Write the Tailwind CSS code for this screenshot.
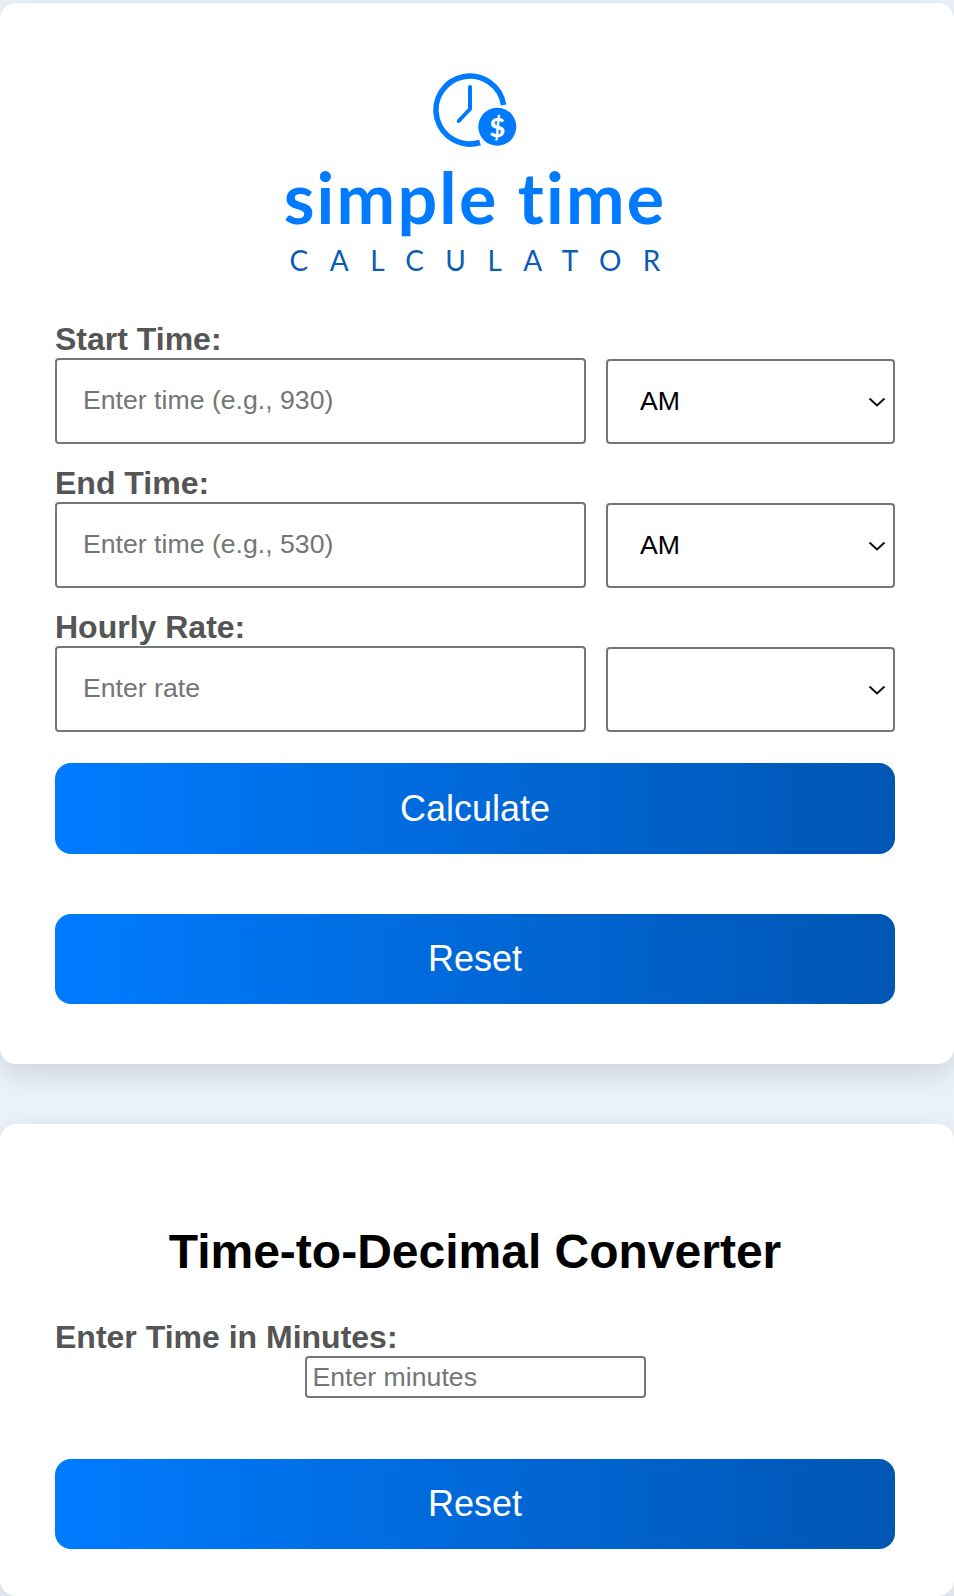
<!DOCTYPE html>
<html lang="en">
<head>
<meta charset="utf-8">
<title>Simple Time Calculator</title>
<script src="https://cdn.jsdelivr.net/npm/@tailwindcss/browser@4"></script>
</head>
<body class="bg-[#ebf2fa] font-['Liberation_Sans',Arial,sans-serif] overflow-hidden h-[1596px]">
<main class="pt-[3px] flex flex-col gap-[60px]">
  <section class="bg-white rounded-[16px] shadow-[0_10px_32px_rgba(0,0,0,0.13)] pl-[55px] pr-[59px] pt-[67px] h-[1061px]">
    <div class="flex flex-col items-center">
      <svg class="block" width="100" height="80" viewBox="425 70 100 80" fill="none">
        <path d="M503.6 105 A34 34 0 1 0 480 142.5" stroke="#007bff" stroke-width="5.5"/>
        <path d="M470 87 V109 L458.7 121" stroke="#007bff" stroke-width="4" stroke-linecap="round" stroke-linejoin="round"/>
        <circle cx="497.3" cy="126.7" r="19" fill="#007bff"/>
        <text x="497.3" y="136.5" text-anchor="middle" fill="#fff" font-size="27" font-weight="900" font-family="Lato, sans-serif">$</text>
      </svg>
      <div class="font-['Lato',sans-serif] font-bold text-[#007bff] text-[70px] leading-[80px] mt-[7px] tracking-[2.2px] whitespace-nowrap">simple time</div>
      <div class="font-['Lato',sans-serif] font-normal text-[#0a5cb4] text-[28px] leading-[30px] mt-[8px] tracking-[21.5px] mr-[-21.5px] whitespace-nowrap">CALCULATOR</div>
    </div>

    <div class="mt-[46px] flex flex-col gap-[21px]">
      <div>
        <label class="block text-[32px] leading-[37px] font-bold text-[#555]">Start Time:</label>
        <div class="flex items-end gap-[20px]">
          <input class="w-[531px] h-[86px] border-2 border-[#767676] rounded-[4px] pl-[26px] pb-[1px] text-[26.67px] placeholder:text-[#757575] bg-white" placeholder="Enter time (e.g., 930)">
          <div class="relative w-[289px] h-[85px]">
            <select class="appearance-none w-full h-full border-2 border-[#767676] rounded-[4px] pl-[32px] pb-[2px] text-[26.67px] text-black bg-white"><option>AM</option><option>PM</option></select>
            <svg class="absolute right-[9px] top-[38px] pointer-events-none" width="18" height="10" viewBox="0 0 18 10" fill="none"><path d="M1.5 1.5 L9 8.5 L16.5 1.5" stroke="#111" stroke-width="2"/></svg>
          </div>
        </div>
      </div>
      <div>
        <label class="block text-[32px] leading-[37px] font-bold text-[#555]">End Time:</label>
        <div class="flex items-end gap-[20px]">
          <input class="w-[531px] h-[86px] border-2 border-[#767676] rounded-[4px] pl-[26px] pb-[1px] text-[26.67px] placeholder:text-[#757575] bg-white" placeholder="Enter time (e.g., 530)">
          <div class="relative w-[289px] h-[85px]">
            <select class="appearance-none w-full h-full border-2 border-[#767676] rounded-[4px] pl-[32px] pb-[2px] text-[26.67px] text-black bg-white"><option>AM</option><option>PM</option></select>
            <svg class="absolute right-[9px] top-[38px] pointer-events-none" width="18" height="10" viewBox="0 0 18 10" fill="none"><path d="M1.5 1.5 L9 8.5 L16.5 1.5" stroke="#111" stroke-width="2"/></svg>
          </div>
        </div>
      </div>
      <div>
        <label class="block text-[32px] leading-[37px] font-bold text-[#555]">Hourly Rate:</label>
        <div class="flex items-end gap-[20px]">
          <input class="w-[531px] h-[86px] border-2 border-[#767676] rounded-[4px] pl-[26px] pb-[1px] text-[26.67px] placeholder:text-[#757575] bg-white" placeholder="Enter rate">
          <div class="relative w-[289px] h-[85px]">
            <select class="appearance-none w-full h-full border-2 border-[#767676] rounded-[4px] pl-[32px] pb-[2px] text-[26.67px] text-black bg-white"><option></option><option>USD</option></select>
            <svg class="absolute right-[9px] top-[38px] pointer-events-none" width="18" height="10" viewBox="0 0 18 10" fill="none"><path d="M1.5 1.5 L9 8.5 L16.5 1.5" stroke="#111" stroke-width="2"/></svg>
          </div>
        </div>
      </div>
    </div>

    <button class="block w-full h-[91px] mt-[31px] rounded-[16px] bg-linear-to-r from-[#007bff] to-[#0056b3] text-white text-[36px]">Calculate</button>
    <button class="block w-full h-[90px] mt-[60px] rounded-[16px] bg-linear-to-r from-[#007bff] to-[#0056b3] text-white text-[36px]">Reset</button>
  </section>

  <section class="bg-white rounded-[16px] shadow-[0_10px_32px_rgba(0,0,0,0.13)] pl-[55px] pr-[59px] pt-[96px] h-[472px]">
    <h2 class="text-[48px] leading-[64px] font-bold text-black text-center">Time-to-Decimal Converter</h2>
    <label class="block mt-[35px] text-[32px] leading-[37px] font-bold text-[#555]">Enter Time in Minutes:</label>
    <input class="block mx-auto w-[341px] h-[42px] border-2 border-[#767676] rounded-[4px] px-[6px] text-[26.67px] placeholder:text-[#757575] bg-white" placeholder="Enter minutes">
    <button class="block w-full h-[90px] mt-[61px] rounded-[16px] bg-linear-to-r from-[#007bff] to-[#0056b3] text-white text-[36px]">Reset</button>
  </section>
</main>
</body>
</html>
